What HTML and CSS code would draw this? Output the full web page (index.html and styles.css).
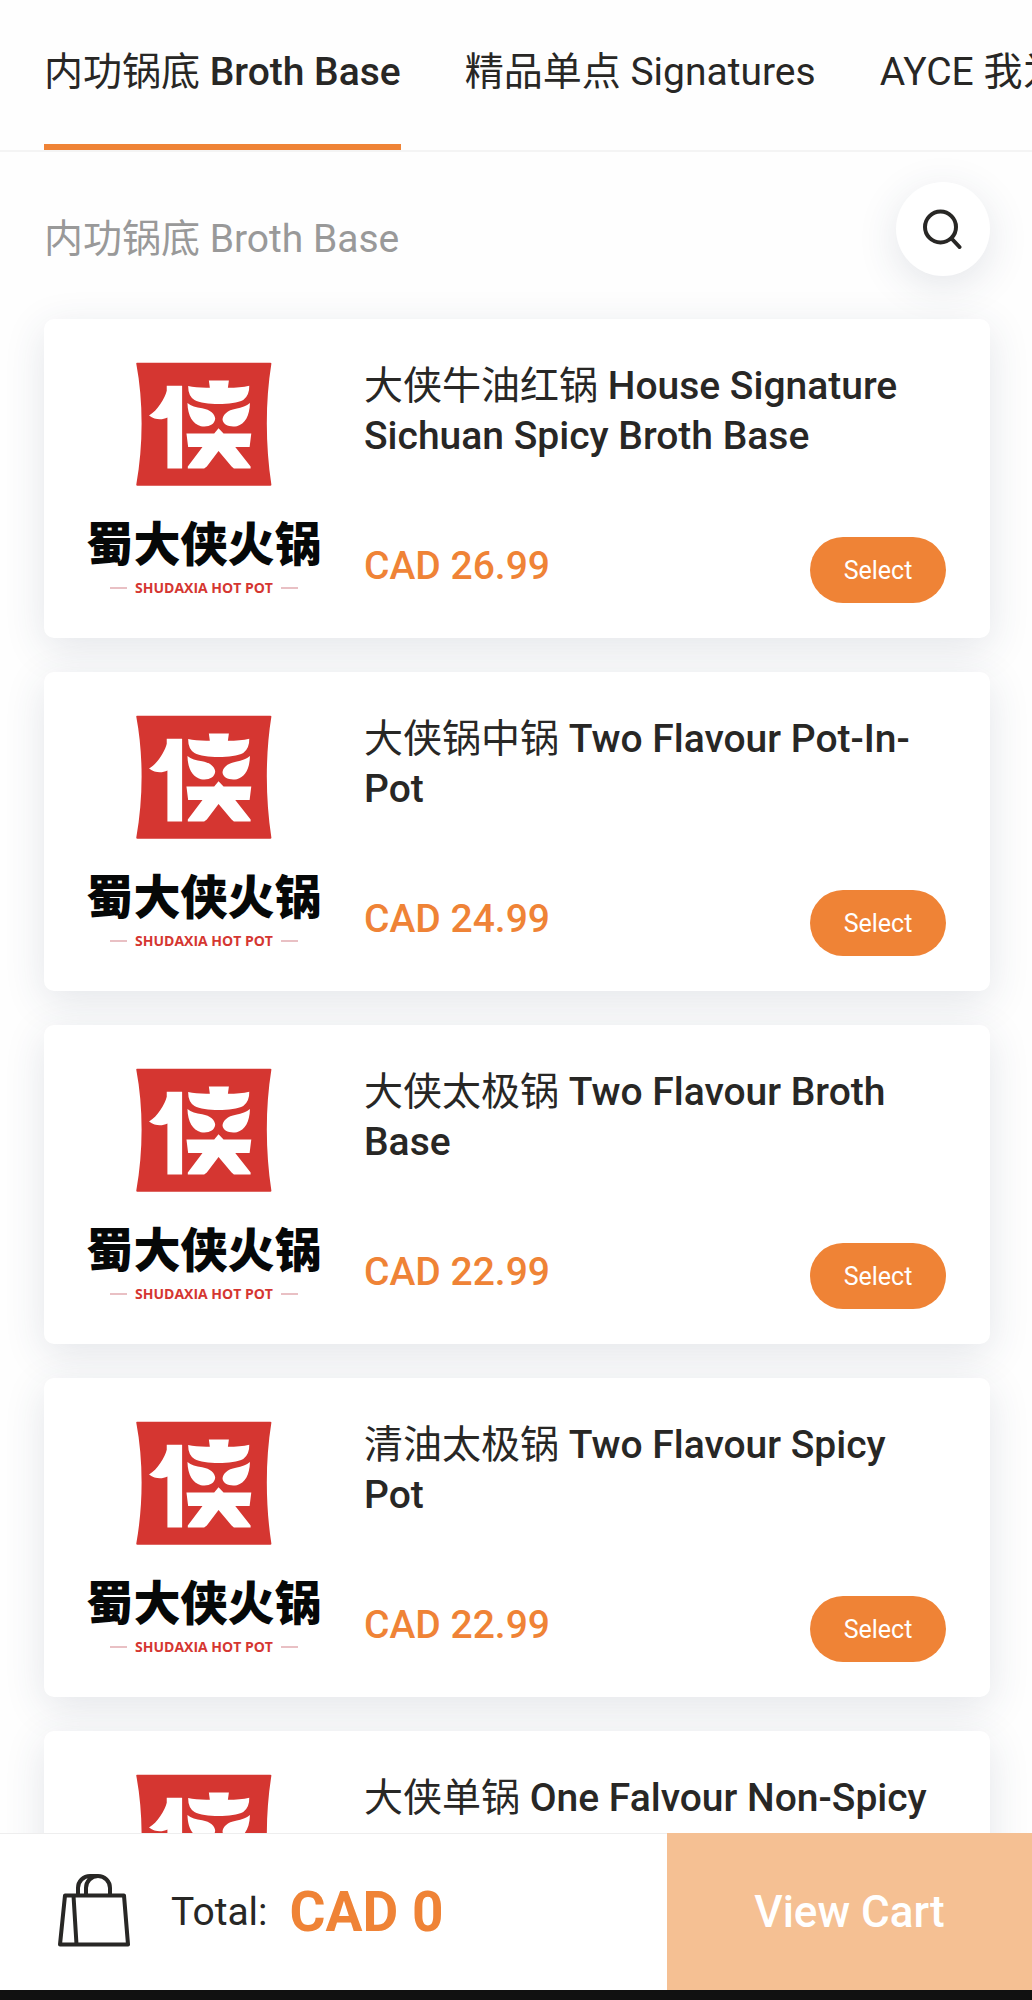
FILE: index.html
```html
<!DOCTYPE html>
<html lang="zh-CN">
<head>
    <meta charset="UTF-8">
    <meta name="viewport" content="width=device-width, initial-scale=1.0">
    <title>Shudaxia Hot Pot</title>
    <link rel="stylesheet" href="styles.css">
</head>
<body>
    <!-- Shared emblem, reused by every card -->
    <svg class="sprite" aria-hidden="true">
        <symbol id="emblem" viewBox="20 22 407 371">
            <path fill="#d53631" d="M23 24H422Q426 24 425 28C407 140 407 270 425 388Q426 392 422 392H24Q20 392 21 388C42 270 42 140 21 28Q20 24 23 24Z"/>
            <g fill="#fff">
                <path d="M112 93H158V341H114V188C98 196 78 196 59 182C84 168 107 130 112 108Z"/>
                <path d="M238 77H298L295 99Q332 99 359 93Q360 121 341 136C310 152 224 152 195 136Q176 124 176 94Q202 100 241 99Z"/>
                <path d="M174 145Q190 158 218 160C242 164 257 178 257 192C255 210 236 218 214 214C190 208 175 184 174 145Z"/>
                <path d="M361 145Q346 158 319 162C294 166 279 180 279 195C281 210 300 218 322 214C346 208 360 184 361 145Z"/>
                <path d="M171 236H254L267 220L282 236H365L360 276H317L363 335V341H313L306 335L267 288L232 335L224 341H175V335L219 276H176Z"/>
            </g>
        </symbol>
    </svg>

    <div class="app">
        <nav class="tabs">
            <a href="#broth" class="tab active"><span class="zh">内功锅底</span> Broth Base</a>
            <a href="#signatures" class="tab"><span class="zh">精品单点</span> Signatures</a>
            <a href="#ayce" class="tab">AYCE <span class="zh">我为</span></a>
        </nav>

        <main class="menu" id="broth">
            <div class="menu-header">
                <h1><span class="zh">内功锅底</span> Broth Base</h1>
                <button class="search" aria-label="Search">
                    <svg viewBox="0 0 40 40" fill="none" stroke="#282725" stroke-width="4" stroke-linecap="round">
                        <circle cx="17.500" cy="18" r="15.500"/>
                        <path d="M29 30L36.500 38"/>
                    </svg>
                </button>
            </div>

            <article class="card">
                <div class="logo">
                    <svg><use href="#emblem"/></svg>
                    <div class="logo-name">蜀大侠火锅</div>
                    <div class="logo-sub">SHUDAXIA HOT POT</div>
                </div>
                <div class="card-body">
                    <h2><span class="zh">大侠牛油红锅</span> House Signature Sichuan Spicy Broth Base</h2>
                    <div class="card-footer">
                        <span class="price">CAD 26.99</span>
                        <button class="select">Select</button>
                    </div>
                </div>
            </article>

            <article class="card">
                <div class="logo">
                    <svg><use href="#emblem"/></svg>
                    <div class="logo-name">蜀大侠火锅</div>
                    <div class="logo-sub">SHUDAXIA HOT POT</div>
                </div>
                <div class="card-body">
                    <h2><span class="zh">大侠锅中锅</span> Two Flavour Pot-In-Pot</h2>
                    <div class="card-footer">
                        <span class="price">CAD 24.99</span>
                        <button class="select">Select</button>
                    </div>
                </div>
            </article>

            <article class="card">
                <div class="logo">
                    <svg><use href="#emblem"/></svg>
                    <div class="logo-name">蜀大侠火锅</div>
                    <div class="logo-sub">SHUDAXIA HOT POT</div>
                </div>
                <div class="card-body">
                    <h2><span class="zh">大侠太极锅</span> Two Flavour Broth Base</h2>
                    <div class="card-footer">
                        <span class="price">CAD 22.99</span>
                        <button class="select">Select</button>
                    </div>
                </div>
            </article>

            <article class="card">
                <div class="logo">
                    <svg><use href="#emblem"/></svg>
                    <div class="logo-name">蜀大侠火锅</div>
                    <div class="logo-sub">SHUDAXIA HOT POT</div>
                </div>
                <div class="card-body">
                    <h2><span class="zh">清油太极锅</span> Two Flavour Spicy Pot</h2>
                    <div class="card-footer">
                        <span class="price">CAD 22.99</span>
                        <button class="select">Select</button>
                    </div>
                </div>
            </article>

            <article class="card">
                <div class="logo">
                    <svg><use href="#emblem"/></svg>
                </div>
                <div class="card-body">
                    <h2><span class="zh">大侠单锅</span> One Falvour Non-Spicy</h2>
                </div>
            </article>
        </main>

        <footer class="cart-bar">
            <div class="cart-info">
                <svg class="bag" viewBox="0 0 72 73" fill="none" stroke="#282725" stroke-width="4" stroke-linejoin="round">
                    <path d="M7 21.500H66L70 70.500H2ZM15.500 21.500L18.500 70.500"/>
                    <path d="M20 21V14A12 12 0 0 1 32 2H40M28 21V14A12 12 0 0 1 52 14V21"/>
                </svg>
                <span class="total-label">Total:</span>
                <span class="total">CAD 0</span>
            </div>
            <button class="view-cart">View Cart</button>
        </footer>
    </div>
</body>
</html>
```
FILE: styles.css
```css
:root {
    --primary-color: #ef8336;
    --disabled-color: #f5c093;
    --text-color: #282725;
    --muted-color: #999;
    --border-color: #f4f4f4;
    --background-color: #fefefe;
    --shadow: 0 10px 40px rgba(50, 65, 90, 0.13);
}

* {
    box-sizing: border-box;
}

body {
    margin: 0;
    font-family: Roboto, "Noto Sans CJK SC", sans-serif;
    font-size: 39px;
    line-height: 50px;
    color: var(--text-color);
    background-color: var(--background-color);
}

h1,
h2 {
    margin: 0;
    font-size: inherit;
}

button {
    border: none;
    padding: 0;
    font-family: inherit;
    cursor: pointer;
}

.sprite {
    display: none;
}

.zh {
    font-weight: 400;
}

.app {
    display: flex;
    flex-direction: column;
    height: 100vh;
    border-bottom: 10px solid #111;
}

/* Tabs */
.tabs {
    display: flex;
    flex: none;
    gap: 64px;
    padding: 0 44px;
    overflow: hidden;
    border-bottom: 2px solid var(--border-color);
}

.tab {
    flex: none;
    padding: 47px 0;
    border-bottom: 6px solid transparent;
    color: inherit;
    text-decoration: none;
    white-space: nowrap;
}

.tab.active {
    border-color: var(--primary-color);
    font-weight: 500;
}

/* Menu list */
.menu {
    flex: 1;
    min-height: 0;
    padding: 30px 42px 34px 44px;
    overflow-y: auto;
    scrollbar-width: none;
}

.menu-header {
    display: flex;
    align-items: center;
    justify-content: space-between;
    margin-bottom: 43px;
}

.menu-header h1 {
    padding-top: 20px;
    font-weight: 400;
    color: var(--muted-color);
}

.search {
    display: flex;
    align-items: center;
    justify-content: center;
    width: 94px;
    height: 94px;
    border-radius: 50%;
    background-color: #fff;
    box-shadow: var(--shadow);
}

.search svg {
    width: 40px;
    height: 40px;
}

.card {
    display: flex;
    gap: 44px;
    min-height: 319px;
    margin-bottom: 34px;
    padding: 0 44px;
    border-radius: 10px;
    background-color: #fff;
    box-shadow: var(--shadow);
}

.logo {
    display: flex;
    flex: none;
    flex-direction: column;
    align-items: center;
    width: 232px;
    padding-top: 43px;
}

.logo svg {
    width: 136px;
    height: 124px;
    margin-bottom: 32px;
}

.logo-name {
    margin-bottom: 14px;
    font-family: "Noto Sans CJK SC", sans-serif;
    font-size: 47px;
    font-weight: 900;
    line-height: 46px;
    color: #060808;
    white-space: nowrap;
}

.logo-sub {
    display: flex;
    align-items: center;
    gap: 8px;
    font-family: "Open Sans", sans-serif;
    font-size: 14px;
    font-weight: 700;
    line-height: 20px;
    color: #d53631;
    white-space: nowrap;
}

.logo-sub::before,
.logo-sub::after {
    content: "";
    width: 17px;
    height: 2px;
    background-color: #e9c0c4;
}

.card-body {
    display: flex;
    flex: 1;
    flex-direction: column;
    justify-content: space-between;
    padding: 42px 0 35px;
}

.card-body h2 {
    font-weight: 500;
}

.card-footer {
    display: flex;
    align-items: baseline;
    justify-content: space-between;
}

.price {
    font-weight: 500;
    color: var(--primary-color);
}

.select {
    width: 136px;
    height: 66px;
    border-radius: 33px;
    background-color: var(--primary-color);
    color: #fff;
    font-size: 25px;
}

/* Bottom bar */
.cart-bar {
    display: flex;
    flex: none;
    height: 157px;
    background-color: #fff;
}

.cart-info {
    display: flex;
    flex: 1;
    align-items: center;
    padding-left: 58px;
    border-top: 1px solid #eee;
}

.bag {
    width: 72px;
    height: 73px;
    margin: 0 41px 4px 0;
}

.total-label {
    margin-right: 22px;
}

.total {
    font-size: 55px;
    font-weight: 700;
    color: var(--primary-color);
}

.view-cart {
    width: 365px;
    background-color: var(--disabled-color);
    color: #fff;
    font-size: 44px;
    font-weight: 500;
}
```
